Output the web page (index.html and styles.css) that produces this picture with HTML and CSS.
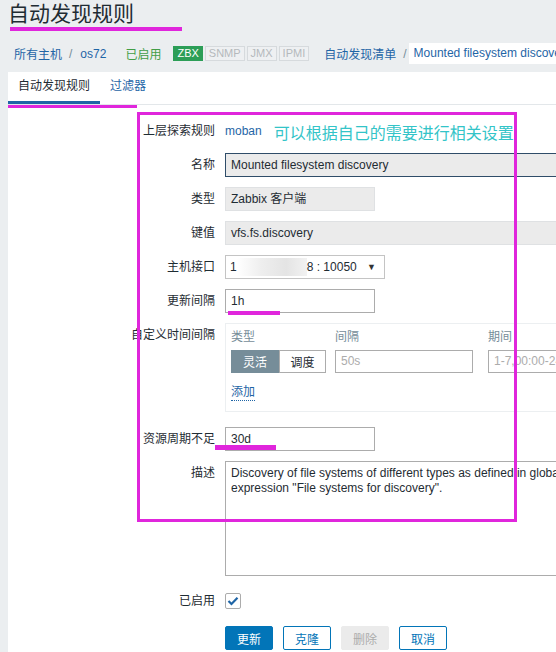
FILE: index.html
```html
<!DOCTYPE html>
<html lang="zh">
<head>
<meta charset="utf-8">
<title>自动发现规则</title>
<link rel="stylesheet" href="styles.css">
</head>
<body>
<div class="page">
  <header class="page-head">
    <h1 class="page-title">自动发现规则</h1>
    <span class="mark mark-title"></span>
  </header>
  <nav class="breadcrumbs">
    <a class="crumb">所有主机</a><span class="sep">/</span><a class="crumb">os72</a>
    <span class="status-on">已启用</span>
    <span class="badges">
      <span class="badge badge-on">ZBX</span>
      <span class="badge">SNMP</span>
      <span class="badge">JMX</span>
      <span class="badge">IPMI</span>
    </span>
    <a class="crumb crumb-list">自动发现清单</a><span class="sep">/</span>
    <span class="crumb-current">Mounted filesystem discovery</span>
  </nav>
  <main class="panel">
    <div class="tabs">
      <span class="tab tab-active">自动发现规则</span>
      <span class="tab tab-link">过滤器</span>
      <span class="mark mark-tabs"></span>
    </div>
    <form class="form">
      <span class="mark mark-box"></span>
      <span class="mark mark-1h"></span>
      <span class="mark mark-30d"></span>

      <label class="lbl">上层探索规则</label>
      <div class="val val-text"><a class="link">moban</a><span class="note">可以根据自己的需要进行相关设置</span></div>

      <label class="lbl">名称</label>
      <div class="val"><div class="field field-wide field-focus">Mounted filesystem discovery</div></div>

      <label class="lbl">类型</label>
      <div class="val"><div class="field field-short field-ro">Zabbix 客户端</div></div>

      <label class="lbl">键值</label>
      <div class="val"><div class="field field-wide field-ro">vfs.fs.discovery</div></div>

      <label class="lbl">主机接口</label>
      <div class="val"><div class="field field-select"><span>1</span><span class="blur"></span><span>8 : 10050</span><span class="caret">▼</span></div></div>

      <label class="lbl">更新间隔</label>
      <div class="val"><div class="field field-short">1h</div></div>

      <label class="lbl lbl-top">自定义时间间隔</label>
      <div class="val">
        <div class="intervals">
          <span class="ih">类型</span><span class="ih">间隔</span><span class="ih">期间</span>
          <span class="seg"><span class="seg-btn seg-on">灵活</span><span class="seg-btn">调度</span></span>
          <span class="field field-iv placeholder">50s</span>
          <span class="field field-per placeholder">1-7,00:00-24:00</span>
          <a class="add-link">添加</a>
        </div>
      </div>

      <label class="lbl">资源周期不足</label>
      <div class="val"><div class="field field-short">30d</div></div>

      <label class="lbl lbl-top">描述</label>
      <div class="val"><div class="field field-area">Discovery of file systems of different types as defined in global regular expression "File systems for discovery".</div></div>

      <label class="lbl lbl-check">已启用</label>
      <div class="val val-check"><span class="checkbox"><svg width="12" height="10" viewBox="0 0 12 10"><path d="M1.5 5 L4.5 8 L10.5 1.8" fill="none" stroke="#1f65a6" stroke-width="2.2"/></svg></span></div>

      <span class="lbl"></span>
      <div class="val buttons">
        <span class="btn btn-primary">更新</span>
        <span class="btn">克隆</span>
        <span class="btn btn-disabled">删除</span>
        <span class="btn">取消</span>
      </div>
    </form>
  </main>
</div>
</body>
</html>
```
FILE: styles.css
```css
html, body {
  margin: 0;
  padding: 0;
  width: 556px;
  height: 652px;
  overflow: hidden;
}
body {
  background: #ebeef0;
  font-family: "Liberation Sans", "Noto Sans CJK SC", sans-serif;
  font-size: 12px;
  color: #1f2c33;
}
a { cursor: pointer; }
.page {
  display: flex;
  flex-direction: column;
  height: 652px;
}
.page-head {
  position: relative;
  height: 35px;
  padding: 0 8px;
}
.page-title {
  margin: 0;
  font-size: 21px;
  font-weight: normal;
  line-height: 28px;
  color: #1f2c33;
}
.mark {
  position: absolute;
  background: #e026dc;
}
.mark-title { left: 10px; top: 27px; width: 172px; height: 4px; }

.breadcrumbs {
  height: 37px;
  display: flex;
  align-items: center;
  padding-left: 14px;
  white-space: nowrap;
}
.crumb { color: #1f65a6; }
.sep { color: #768d99; padding: 0 8px 0 7px; }
.status-on { color: #429e47; margin-left: 19px; }
.badges { display: flex; gap: 2px; margin-left: 12px; }
.badge {
  font-size: 11px;
  line-height: 13px;
  padding: 0 3px;
  border: 1px solid #d6dadd;
  color: #b5b9bc;
  background: #eef0f2;
}
.badge-on { background: #2c9e57; border-color: #2c9e57; color: #fff; }
.crumb-list { margin-left: 15px; }
.crumb-current {
  background: #fff;
  color: #1f65a6;
  padding: 4px 6px 4px 5px;
  margin-left: -6px;
  line-height: 13px;
}

.panel {
  flex: 1;
  margin-left: 8px;
  background: #fff;
  position: relative;
}
.tabs {
  position: relative;
  height: 32px;
  display: flex;
  border-bottom: 1px solid #e3e7ea;
}
.tab {
  padding: 0 10px;
  line-height: 29px;
  border-bottom: 3px solid transparent;
  box-sizing: border-box;
  height: 32px;
  display: flex;
  align-items: center;
}
.tab-active { border-bottom-color: #1f65a6; color: #1f2c33; }
.tab-link { color: #1f65a6; }
.mark-tabs { left: 0; top: 33px; width: 129px; height: 3px; }

.form {
  position: relative;
  display: grid;
  grid-template-columns: 207px 1fr;
  column-gap: 10px;
  row-gap: 10px;
  padding-top: 14px;
  margin: 0;
}
.mark-box {
  background: transparent;
  border: 3px solid #e026dc;
  left: 129px;
  top: 7px;
  width: 374px;
  height: 404px;
}
.mark-1h { left: 220px; top: 206px; width: 52px; height: 4px; }
.mark-30d { left: 207px; top: 340px; width: 61px; height: 5px; }

.lbl {
  text-align: right;
  line-height: 24px;
  white-space: nowrap;
  color: #1f2c33;
}
.lbl-check { line-height: 30px; }
.val { min-width: 0; white-space: nowrap; }
.val-text { display: flex; align-items: center; height: 24px; }
.link { color: #1f65a6; }
.note {
  color: #33c4c8;
  font-size: 16px;
  margin-left: 12px;
  position: relative;
  top: 1px;
}
.field {
  box-sizing: border-box;
  height: 24px;
  border: 1px solid #acacac;
  background: #fff;
  padding: 0 5px;
  line-height: 22px;
  display: block;
  overflow: hidden;
  white-space: nowrap;
}
.field-wide { width: 340px; }
.field-short { width: 150px; }
.field-focus { border-color: #2f4d69; background: #ebebeb; }
.field-ro { background: #ebebeb; border-color: #dfe1e3; }
.field-select {
  width: 160px;
  display: flex;
  align-items: center;
  padding-left: 4px;
  border-color: #c4c4c4;
}
.blur {
  display: inline-block;
  width: 70px;
  height: 18px;
  background: linear-gradient(to right, #fff 0%, #eeeeee 35%, #e4e4e4 70%, #f2f2f2 100%);
}
.caret { margin-left: auto; font-size: 9px; color: #333; padding-right: 3px; }

.intervals {
  width: 340px;
  box-sizing: border-box;
  border: 1px solid #eceff1;
  border-right: none;
  padding: 4px 0 10px 5px;
  margin-bottom: 5px;
  display: grid;
  grid-template-columns: 104px 153px 120px;
  grid-template-rows: 18px 23px 24px;
  row-gap: 4px;
}
.ih { color: #768d99; line-height: 18px; }
.seg { display: flex; }
.seg-btn {
  box-sizing: border-box;
  height: 23px;
  width: 47px;
  border: 1px solid #acacac;
  display: flex;
  align-items: center;
  justify-content: center;
  color: #1f2c33;
}
.seg-on { background: #768d99; border-color: #768d99; color: #fff; width: 48px; }
.field-iv { width: 138px; height: 23px; line-height: 21px; }
.field-per { width: 120px; height: 23px; line-height: 21px; }
.placeholder { color: #acacac; }
.add-link {
  grid-column: 1;
  align-self: end;
  justify-self: start;
  color: #1f65a6;
  line-height: 15px;
  border-bottom: 1px dotted #1f65a6;
}

.field-area {
  width: 420px;
  height: 115px;
  white-space: normal;
  line-height: 15px;
  padding: 4px 5px;
}
.val-check { display: flex; align-items: center; height: 30px; }
.checkbox {
  box-sizing: border-box;
  width: 16px;
  height: 16px;
  border: 1px solid #acacac;
  border-radius: 2px;
  display: flex;
  align-items: center;
  justify-content: center;
}
.buttons { display: flex; gap: 10px; }
.btn {
  box-sizing: border-box;
  width: 48px;
  height: 24px;
  border: 1px solid #0275b8;
  border-radius: 2px;
  color: #0275b8;
  background: #fff;
  display: flex;
  align-items: center;
  justify-content: center;
}
.btn-primary { background: #0275b8; color: #fff; }
.btn-disabled { background: #ebebeb; border-color: #ebebeb; color: #acacac; }
```
